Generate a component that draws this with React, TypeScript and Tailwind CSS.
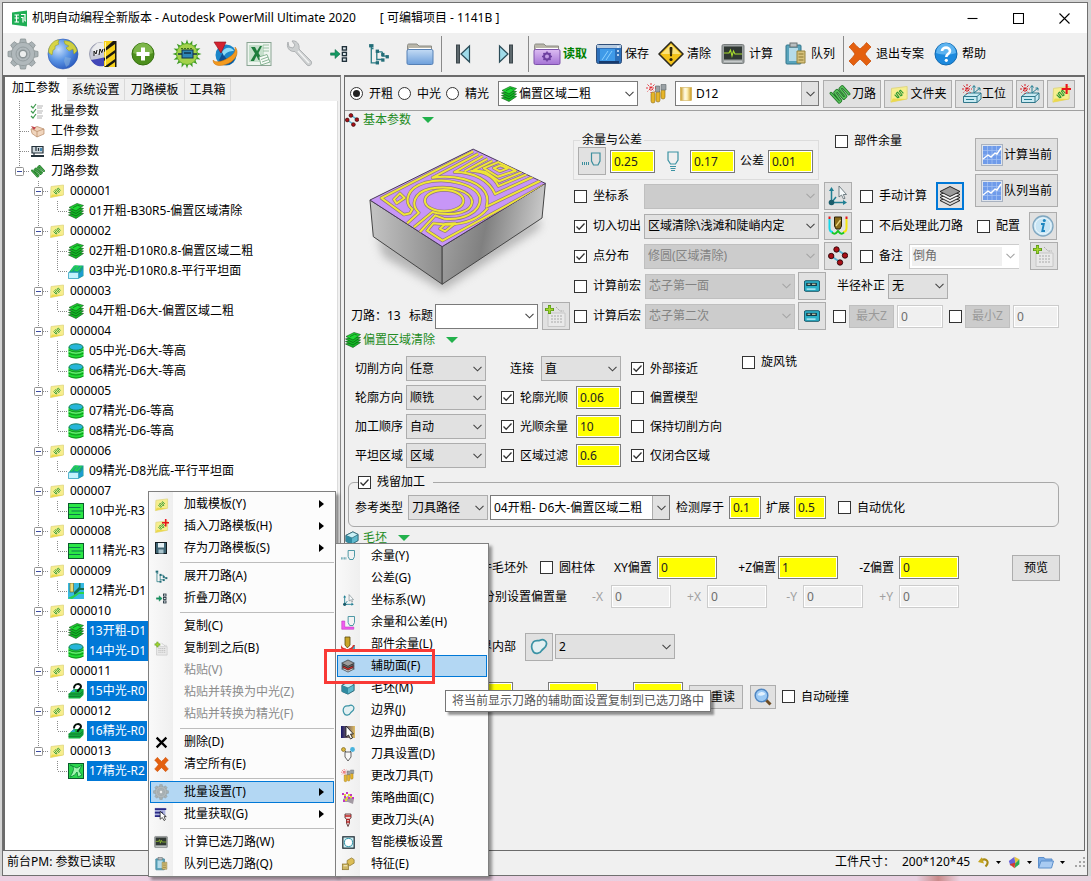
import React, { useState } from "react";
import type { ReactNode } from "react";

/* ---------- icon helpers ---------- */

type SvgProps = { s?: number; w?: number; h?: number; vb?: string; children?: ReactNode };

function Svg({ s = 16, w, h, vb = "0 0 16 16", children }: SvgProps) {
  return (
    <svg width={w ?? s} height={h ?? s} viewBox={vb} fill="none" className="block shrink-0" aria-hidden="true">
      {children}
    </svg>
  );
}

const Gear = ({ s = 32 }: { s?: number }) => (
  <Svg s={s} vb="0 0 32 32">
    <g fill="#a9b2b5" stroke="#8b9496" strokeWidth="0.8">
      {[0, 45, 90, 135, 180, 225, 270, 315].map((a) => (
        <path key={a} d="M12.5 6 L13.5 1 H18.5 L19.5 6 Z" transform={`rotate(${a} 16 16)`} />
      ))}
      <circle cx="16" cy="16" r="11.5" />
    </g>
    <circle cx="16" cy="16" r="11" fill="#b0b8bb" />
    <circle cx="16" cy="16" r="7" stroke="#949da0" strokeWidth="1" />
    <circle cx="16" cy="16" r="3.8" fill="#eceeee" stroke="#8b9496" strokeWidth="1.4" />
  </Svg>
);

const Globe = () => (
  <Svg s={32} vb="0 0 32 32">
    <defs>
      <radialGradient id="globe" cx="0.35" cy="0.35" r="0.8">
        <stop offset="0" stopColor="#c4ddfb" />
        <stop offset="0.45" stopColor="#5d97e6" />
        <stop offset="1" stopColor="#1f4db5" />
      </radialGradient>
    </defs>
    <circle cx="16" cy="16" r="15" fill="url(#globe)" stroke="#2a56b4" strokeWidth="0.6" />
    <path d="M3 8 C6 3 9 2 12 2 L11 5 L12 6 L8 8 L8 11 L6 12 L5 17 L2 15 C1 13 2 10 3 8Z" fill="#d8d545" stroke="#9aa12b" strokeWidth="0.6" />
    <path d="M17 3 C23 2 29 7 30 13 L27 16 L26 11 L22 13 L19 10 L22 8 L18 6Z" fill="#cfd03f" stroke="#9aa12b" strokeWidth="0.6" />
    <path d="M18 19 L24 20 L22 27 L19 29 L17 23Z" fill="#8fb7dc" opacity="0.5" />
  </Svg>
);

const Drill = () => (
  <Svg s={28} vb="0 0 28 28">
    <circle cx="12" cy="14" r="11.5" fill="#c8cad6" stroke="#8b8fa6" strokeWidth="0.8" />
    <path d="M2 20 C6 27 14 28 18 24 L17 17 L8 19Z" fill="#4247b8" />
    <path d="M3 9 L8 3 L16 2 L15 11 L5 16Z" fill="#f4f4f4" opacity="0.8" />
    <path d="M5 16 V11 L7 14 L8 10 M10 15 L11 9 L13 13 M14 9 L13 12" stroke="#111" strokeWidth="1" />
    <rect x="15" y="1" width="12" height="26" fill="#f7d21c" />
    <path d="M15 27 L26 19 V22 L19 27Z M15 18 L26 10 V13 L15 21Z M15 9 L24 1 H26 V4 L15 12Z M26 1 H27.5 V27 H26Z" fill="#1b1a10" />
    <path d="M16.500 2 V26" stroke="#fff3a0" strokeWidth="1" />
  </Svg>
);

const PlusBall = () => (
  <Svg s={24} vb="0 0 24 24">
    <circle cx="12" cy="12" r="11" fill="#4d8f1d" stroke="#35700f" />
    <path d="M2 11 A10 10 0 0 1 22 11 C16 13 8 13 2 11Z" fill="#7db64a" />
    <path d="M10 5.5 H14 V10 H18.5 V14 H14 V18.5 H10 V14 H5.5 V10 H10Z" fill="#fff" />
  </Svg>
);

const Chip = () => (
  <Svg s={30} vb="0 0 30 30">
    <g fill="#3d9a22">
      {[0, 22, 45, 67, 90, 112, 135, 157, 180, 202, 225, 247, 270, 292, 315, 337].map((a) => (
        <path key={a} d="M12.8 7 L15 0.5 L17.2 7Z" transform={`rotate(${a} 15 15)`} />
      ))}
    </g>
    <circle cx="15" cy="15" r="10.5" fill="#a4d24a" stroke="#5fae2c" strokeWidth="1" />
    <path d="M9 9.500 H20" stroke="#3f6e1a" strokeDasharray="2 1" />
    <rect x="10" y="11" width="11" height="8" fill="#2f86b5" stroke="#12354c" />
    <path d="M6 15 H10 M21 15 H25 M12 14 H19" stroke="#12354c" strokeWidth="1.3" />
  </Svg>
);

const Swirl = () => (
  <Svg s={28} vb="0 0 28 28">
    <circle cx="15" cy="15" r="10.5" fill="#1b86c9" />
    <path d="M8 20 C12 26 20 27 24 19 C18 22 13 18 12 12Z" fill="#0c4f93" />
    <path d="M11 12 C14 7 20 6 23 11 C19 11 15 12 13 16Z" fill="#8fdcf5" />
    <path d="M2 20 C2 27 12 27 20 22 C26 18 28 11 24 7 C25 12 22 15 17 18 C11 22 4 23 2 20Z" fill="#f39a1e" stroke="#c96f0b" strokeWidth="0.5" />
    <path d="M3 2 L15 2 L10 13 Z" fill="#d32330" stroke="#8f0f1a" strokeWidth="0.6" />
  </Svg>
);

const Excel = () => (
  <Svg s={26} vb="0 0 26 26">
    <rect x="1" y="1.5" width="24" height="23" fill="#eef5ef" stroke="#8aa493" />
    <rect x="3" y="4" width="15" height="17" fill="#c5dfcb" />
    <path d="M17 4 H23 M17 7 H23 M17 10 H23" stroke="#9cc2a5" />
    <path d="M5 6 L9 6 L11 10 L14 5 L16 5 L12.5 12 L16.5 19 H12.5 L10.5 15 L8 20 H4.5 L9 12.5Z" fill="#1f7d3d" />
    <path d="M13 16 L21 13.5 L24 21 L15 24Z" fill="#f7fbf7" stroke="#6ea37d" strokeWidth="0.8" />
    <path d="M15 18.500 L22 16 M16 21 L23 18.500" stroke="#6ea37d" strokeWidth="0.8" />
  </Svg>
);

const Wrench = () => (
  <Svg s={28} vb="0 0 28 28">
    <path
      d="M3 2 C1 7 4 12 10 11.500 L22 25 C24.500 27 28 24 26 21 L14 9 C15 4 11 0 7 1 L10 5 L8 8 L4 7Z"
      fill="#cdd0d1"
      stroke="#a9adaf"
      strokeWidth="0.900"
    />
    <path d="M13 11 L24 23" stroke="#f3f4f4" strokeWidth="1.500" />
  </Svg>
);

const Collapse = ({ s = 18 }: { s?: number }) => (
  <Svg s={s}>
    <path d="M0.500 7 H4.500 V4 L9 8 L4.500 12 V9 H0.500Z" fill="#159a63" stroke="#0d6d46" strokeWidth="0.500" />
    <g stroke="#20303a" strokeWidth="1.200" fill="#dfe8ec">
      <rect x="11" y="1.500" width="3.600" height="3" />
      <rect x="11" y="6.500" width="3.600" height="3" />
      <rect x="11" y="11.500" width="3.600" height="3" />
    </g>
  </Svg>
);

const TreeIcon = ({ s = 22 }: { s?: number }) => (
  <Svg s={s} vb="0 0 20 20">
    <path d="M3 3 V18 H8 M3 5 H5 M8 8 V16 M8 8 H13 M13 8 V12 H17 M8 15 H13" stroke="#2b7c85" strokeWidth="1.200" />
    <g fill="#236d78">
      <rect x="1" y="1" width="4" height="3" />
      <rect x="7" y="6" width="3" height="3" />
      <rect x="12" y="9" width="3" height="3" />
      <rect x="16" y="11" width="3" height="3" />
      <rect x="12" y="14" width="3" height="3" />
      <rect x="7" y="16.500" width="3" height="3" />
    </g>
  </Svg>
);

const Folder = ({ tone = "blue" }: { tone?: "blue" | "purple" }) => {
  const id = "fold" + tone;
  return (
    <Svg w={28} h={24} vb="0 0 28 24">
      <defs>
        <linearGradient id={id} x1="0" y1="0" x2="0" y2="1">
          <stop offset="0" stopColor={tone === "blue" ? "#c3dbf4" : "#dcbcf2"} />
          <stop offset="1" stopColor={tone === "blue" ? "#6d9fdb" : "#a574d6"} />
        </linearGradient>
      </defs>
      <path d="M1.500 5 V3.500 C1.500 2.500 2 2 3 2 H11 L13 4 H25.500 V8 H1.500Z" fill="#b9b6a9" stroke="#8c8c86" />
      <path d="M3 6 H25 V9 H3Z" fill="#fff" />
      <rect x="1" y="7.500" width="26" height="15" rx="1.500" fill={`url(#${id})`} stroke={tone === "blue" ? "#5580b5" : "#7e52ab"} />
      {tone === "purple" && (
        <g>
          <circle cx="14" cy="14.500" r="3" stroke="#6d3fa0" strokeWidth="2" />
          <path d="M14 9.500 V11 M14 18 V19.500 M9 14.500 H10.500 M17.500 14.500 H19 M10.500 11 L11.500 12 M16.500 17 L17.500 18 M17.500 11 L16.500 12 M10.500 18 L11.500 17" stroke="#6d3fa0" strokeWidth="1.500" />
        </g>
      )}
    </Svg>
  );
};

const Skip = ({ flip = false }: { flip?: boolean }) => (
  <Svg s={20} vb="0 0 20 20">
    <g transform={flip ? "matrix(-1 0 0 1 20 0)" : undefined}>
      <rect x="3.500" y="1" width="3" height="18" fill="#5c676c" stroke="#3c474c" />
      <path d="M16.500 2 V18 L8 10Z" fill="#9fdbe9" stroke="#2b4c58" strokeWidth="1.200" />
    </g>
  </Svg>
);

const SaveIcon = () => (
  <Svg w={26} h={22} vb="0 0 26 22">
    <rect x="0.500" y="1.500" width="25" height="19" rx="2" fill="#2c6fb9" stroke="#2f4f7a" />
    <rect x="1" y="2" width="24" height="3" fill="#b7cbe0" />
    <rect x="4" y="6" width="15" height="12" fill="#3f9ae8" />
    <path d="M6 17 L12 8 M10 17 L16 8" stroke="#8bd0ff" />
    <path d="M21 4 H23 M21 8 H23 M21 12 H23" stroke="#e8f3ff" strokeWidth="1.500" />
    <rect x="3" y="18" width="20" height="2" fill="#163a6e" />
  </Svg>
);

const Warn = () => (
  <Svg s={26} vb="0 0 26 26">
    <path d="M13 1 L25 13 L13 25 L1 13Z" fill="#f3c21a" stroke="#2c2a20" strokeWidth="1.600" strokeLinejoin="round" />
    <path d="M13 3.500 L22.500 13 H3.500Z" fill="#fbe27a" />
    <path d="M12 6.500 H14 L13.500 15 H12.500Z" fill="#2d2407" stroke="#2d2407" />
    <circle cx="13" cy="18.500" r="1.600" fill="#2d2407" />
  </Svg>
);

const Monitor = ({ s = 24 }: { s?: number }) => (
  <Svg s={s} vb="0 0 24 24">
    <rect x="1" y="2.500" width="22" height="19" rx="1.500" fill="#9da2a2" stroke="#777c7c" />
    <rect x="3" y="4.500" width="18" height="13" fill="#303833" />
    <path d="M3 11 H8 L9.500 8 L11 14 L12.500 9 L14 12 H21" stroke="#a8dd2e" strokeWidth="1.100" />
    <path d="M3 19.500 H21" stroke="#c6caca" strokeWidth="1.500" />
  </Svg>
);

const Queue = ({ s = 24 }: { s?: number }) => (
  <Svg s={s} vb="0 0 24 24">
    <rect x="3" y="3" width="15" height="19" rx="1" fill="#58a3bb" stroke="#33768c" />
    <rect x="7" y="1" width="7" height="4" fill="#b9bfc1" stroke="#6c7375" />
    <path d="M6 6 H15 V19 H6Z" fill="#b5dbe9" />
    <path d="M14 9 H22 V21 H14Z" fill="#d7c27c" stroke="#96823b" />
    <path d="M15.500 12 H20.500 M15.500 15 H20.500 M15.500 18 H20.500" stroke="#8a7731" />
  </Svg>
);

const CrossMark = ({ s = 24, fill = "#e4600f" }: { s?: number; fill?: string }) => (
  <Svg s={s} vb="0 0 24 24">
    <path
      d="M1 5 L5.500 0.500 C7 3 10 5 12 7 C14 5 17 3 18.500 0.500 L23 5 C21 7 18.500 9.500 17 12 C18.500 14.500 21 17 23 19 L18.500 23.500 C16.500 21 14 19 12 17 C10 19 7.500 21 5.500 23.500 L1 19 C3 17 5.500 14.500 7 12 C5.500 9.500 3 7 1 5Z"
      fill={fill}
      stroke="#c9520c"
      strokeWidth="0.800"
    />
  </Svg>
);

const Help = () => (
  <Svg s={24} vb="0 0 24 24">
    <circle cx="12" cy="12" r="11" fill="#1d8ade" stroke="#1369ae" />
    <path d="M2 11 A10 10 0 0 1 22 11 C16 13 8 13 2 11Z" fill="#5cb3f0" />
    <path d="M8 9 C8 4.500 16 4.500 16 9 C16 12 12.300 11.800 12.300 15" stroke="#fff" strokeWidth="2.600" />
    <circle cx="12.300" cy="18.300" r="1.600" fill="#fff" />
  </Svg>
);

const AppLogo = () => (
  <Svg s={17} vb="0 0 17 17">
    <path d="M1 2.500 L16 0.500 V16.500 L1 14.500Z" fill="#1fae55" />
    <path d="M3.500 5 H8 M3.500 8 H8 M5.500 5 V12 M3.500 12 H8 M10 4.500 H14 V11 M10 7.500 H12 V12.500 M14 11 H15" stroke="#fff" strokeWidth="1.200" />
  </Svg>
);

/* Small glyphs: tree, menus, form buttons */

const Coil = ({ s = 16 }: { s?: number }) => (
  <Svg s={s}>
    <g strokeLinecap="round" strokeLinejoin="round">
      <path d="M2 7.500 L7.500 13.500 L8.500 12.500 L4.500 7 L6 5.500 L10.500 11 L12 9.500 L8 4.500 L9.500 3 L14 8" stroke="#1f7526" strokeWidth="2" />
      <path d="M2 7.500 L7.500 13.500 L8.500 12.500 L4.500 7 L6 5.500 L10.500 11 L12 9.500 L8 4.500 L9.500 3 L14 8" stroke="#58bf5b" strokeWidth="0.900" />
    </g>
  </Svg>
);

const Note = ({ s = 16, plus = false }: { s?: number; plus?: boolean }) => (
  <Svg s={s}>
    <path d="M2 3.500 L14.500 2 V12 L1.500 14.500Z" fill="#f6ee8e" stroke="#ddd37c" strokeWidth="0.700" />
    <path d="M1.500 14.500 L3 11.500 L14.500 12Z" fill="#ecd94e" />
    <path d="M4.500 8.500 L7 11 L8 10.500 L5.800 7.500 L6.800 6.500 L9.500 9.500 L10.500 8.800 L8.300 5.800 L9.300 5 L11.500 7.500" stroke="#2f9a33" strokeWidth="0.900" strokeLinejoin="round" />
    {plus && <path d="M12.500 0 V8 M8.500 4 H16" stroke="#e8161d" strokeWidth="1.700" />}
  </Svg>
);

const Layers = ({ s = 16 }: { s?: number }) => (
  <Svg s={s}>
    <g fill="#14b825" stroke="#06510f" strokeWidth="0.600">
      <path d="M0.500 12 L10 9.500 L15.500 10.500 L8 15.500Z" />
      <path d="M0.500 9.500 L10 7 L15.500 8 L8 13Z" />
      <path d="M0.500 7 L10 4.500 L15.500 5.500 L8 10.500Z" />
      <path d="M1 4.500 L9 0.500 L15.500 2.500 L8 8Z" fill="#1fd733" />
    </g>
    <path d="M5 4.600 L9.500 2.300 L12.500 3.200" stroke="#0a7217" strokeWidth="0.800" />
  </Svg>
);

const Cyl = () => (
  <Svg>
    <path d="M0.500 4 V13.500 Q8 17.500 15.500 13.500 V4Z" fill="#1fdc33" />
    <path d="M0.500 7.200 Q8 10.800 15.500 7.200 M0.500 10.200 Q8 13.800 15.500 10.200 M0.500 13.200 Q8 16.800 15.500 13.200" stroke="#0c7a1b" strokeWidth="0.800" />
    <path d="M1 8.300 Q8 12 15 8.300" stroke="#d8f7d8" strokeWidth="0.500" />
    <ellipse cx="8" cy="4" rx="7" ry="3.200" fill="#27b5d9" stroke="#127a58" strokeWidth="0.900" />
  </Svg>
);

const Flat = () => (
  <Svg>
    <path d="M1 9 L6 2.500 H15.500 V13 L11 15.500 H0.500Z" fill="#1a9d8c" />
    <path d="M0.500 9.500 H10.500 V15.500 H0.500Z" fill="#c4f2fc" stroke="#2e9fc0" strokeWidth="0.700" />
    <path d="M3 8 L7.500 3 L10 3.500 L7 7 L9.500 7.500 L13.500 3" stroke="#25d84c" strokeWidth="1.200" />
    <path d="M11 11 L15 6 V12.500 L11 15Z" fill="#1e9dd0" />
  </Svg>
);

const Zig = () => (
  <Svg>
    <rect x="0.500" y="0.500" width="15" height="15" fill="#2be846" stroke="#0a5a2c" />
    <path d="M1 4.500 H12.500 M3.500 8 H15 M1 11.500 H12.500" stroke="#0d7a4c" strokeWidth="1" />
  </Svg>
);

const Corner = () => (
  <Svg>
    <rect width="16" height="16" fill="#37b9e2" />
    <path d="M6 12 V9 L11 4 V0 H12.500 V5 H16 V7 H12 L8 11Z" fill="#146f52" />
    <path d="M0 15 L8 11 L11 9 H16 V11 H11 L4 16Z" fill="#2bd34c" />
    <rect x="2" y="0" width="3.500" height="9" fill="#e9dc7a" stroke="#6a5a12" strokeWidth="0.600" />
  </Svg>
);

const Pencil = () => (
  <Svg>
    <path d="M0.500 11 L6 6 H15.500 V12 L12 15.500 H0.500Z" fill="#16b142" />
    <path d="M0.500 11 H12 L15.500 8 M0.500 13.300 H12 L15.500 10" stroke="#0a6122" strokeWidth="0.700" />
    <path d="M6 5.500 C6 0 13 0 13 3.500 C13 6 10 6 9.500 9" stroke="#051109" strokeWidth="2" />
    <path d="M2.500 9 L6.500 5.500 L7 9Z" fill="#2aa3c4" />
  </Svg>
);

const Star = () => (
  <Svg>
    <rect x="0.500" y="0.500" width="15" height="15" fill="#2bd64d" stroke="#0a5a2c" />
    <path d="M2 2 C6 3 6 6 5 8 C4 11 3 12 2 14 C6 13 8 11 9 9 L10 14 L14 12 L11 8 L14 2 L9 5 Z" fill="#9df5ad" stroke="#0f8a3a" strokeWidth="0.900" />
  </Svg>
);

const Checklist = () => (
  <Svg>
    <path d="M1 3 L3 5 L6 1 M1 8 L3 10 L6 6 M1 13 L3 15 L6 11" stroke="#3f9a4e" strokeWidth="1.200" />
    <path d="M7 3 H13 M7 5 H12 M7 8 H13 M7 10 H12 M7 13 H13 M7 15 H12" stroke="#b4b4b4" strokeWidth="1.200" />
  </Svg>
);

const PartBox = () => (
  <Svg>
    <path d="M1 6 L7 3.500 L14 6 V11 L7 14 L2 10.500Z" fill="#f0d5bd" stroke="#b58763" strokeWidth="0.700" />
    <path d="M2 6 L7 8.500 L14 6 M7 8.500 V14" stroke="#b58763" strokeWidth="0.700" />
    <path d="M1 3 L6 4.500 L4 7Z" fill="#c2424a" />
  </Svg>
);

const Machine = () => (
  <Svg>
    <path d="M2 3.500 H13 V10 H2Z" fill="#cfd8dd" stroke="#23313a" strokeWidth="1.200" />
    <path d="M1 13 H14" stroke="#23313a" strokeWidth="2" />
    <path d="M6 4 V8 M8.500 5 V8 M4 10 V12" stroke="#23313a" strokeWidth="1.200" />
    <rect x="10" y="5" width="2" height="3" fill="#4389b5" />
  </Svg>
);

const Dots = ({ s = 14 }: { s?: number }) => (
  <Svg s={s} vb="0 0 20 20">
    <path d="M9 3.500 L17 9 M3 10 L12 16" stroke="#57b4d2" strokeWidth="2" />
    <g fill="#a80f16" stroke="#2a0507" strokeWidth="0.900">
      <circle cx="8.500" cy="3.500" r="2.700" />
      <circle cx="17" cy="9.500" r="2.700" />
      <circle cx="3.200" cy="10" r="2.700" />
      <circle cx="12" cy="16.500" r="2.700" />
    </g>
  </Svg>
);

const Cutter = ({ s = 20, mode = "side" }: { s?: number; mode?: "side" | "bottom" | "pink" }) => (
  <Svg s={s} vb="0 0 20 20">
    {mode === "pink" && <path d="M1 8 H5 V16 H17 V19 H1Z" fill="#f05bf0" stroke="#b72cb7" strokeWidth="0.700" />}
    {mode === "bottom" ? (
      <g stroke="#3c93a3" strokeWidth="1.200">
        <path d="M5 1 H15 V9 L12.500 13 H7.500 L5 9Z" />
        <path d="M7 15.500 H13 M7.500 17.500 H12.500 M8 19.500 H12" strokeWidth="1" />
      </g>
    ) : (
      <g stroke="#3c8e9d" strokeWidth="1.200">
        <path d="M9.500 2 H18 V10 L16 14 H11.500 L9.500 10Z" />
        {mode === "side" && <path d="M0.500 11 V14 M2.500 11 V14 M4.500 11 V14 M6.500 11 V14" strokeWidth="1" />}
      </g>
    )}
  </Svg>
);

const Axes = ({ s = 22 }: { s?: number }) => (
  <Svg s={s} vb="0 0 22 22">
    <path d="M4.500 17.500 V4 M5 17.500 H18 M5 17 L9 12" stroke="#217f93" strokeWidth="1.500" />
    <path d="M4.500 2 L7 6 H2Z M20 17.500 L16 15 V20Z" fill="#217f93" />
    <circle cx="4.500" cy="17.500" r="2.800" fill="#1a5c6b" />
    <path d="M12 1 V12 L14.500 10 L16.500 14 L18 13.300 L16.300 9.500 H19.500Z" fill="#f6fafb" stroke="#56666c" strokeWidth="0.800" />
  </Svg>
);

const LeadIn = () => (
  <Svg s={22} vb="0 0 22 22">
    <path d="M2.500 4 V13 C2.500 16 4 17 6 17" stroke="#15d6e8" strokeWidth="2" />
    <path d="M19.500 4 V13 C19.500 16 18 17 16 17" stroke="#f4e60c" strokeWidth="2" />
    <path d="M5 17.500 C8 20 9 18 11 16 C13 18 14 20 17 17.500" stroke="#17c722" strokeWidth="2" />
    <path d="M2.500 1.500 V4 M19.500 1.500 V4" stroke="#e51818" strokeWidth="2" />
    <path d="M7.500 2 H14.500 V11 L13 14 H9 L7.500 11Z" fill="#8a6b19" stroke="#2a220a" />
    <path d="M9 11 L13.500 5" stroke="#ead27c" strokeWidth="1.300" />
  </Svg>
);

const Macro = () => (
  <Svg w={16} h={12} vb="0 0 18 13">
    <rect x="0.500" y="0.500" width="17" height="12" rx="1.500" fill="#2daec6" stroke="#114e5f" />
    <rect x="2.500" y="3" width="12" height="3.500" fill="#133945" />
    <path d="M4 4.500 H7 M9 4.500 H13" stroke="#f1e8c0" strokeWidth="1.200" />
    <path d="M3 10 H13" stroke="#bdf0fa" strokeWidth="1.500" />
  </Svg>
);

const Stack = ({ s = 22, red = false }: { s?: number; red?: boolean }) => (
  <Svg s={s} vb="0 0 22 22">
    <g stroke="#111" strokeWidth="0.900" strokeLinejoin="round">
      <path d="M1 15.500 L11 11 L21 15.500 L11 20.500Z" fill="#d8d8d8" />
      <path d="M1 12.500 L11 8 L21 12.500 L11 17.500Z" fill={red ? "#e0322f" : "#f2f2f2"} />
      <path d="M1 9.500 L11 5 L21 9.500 L11 14.500Z" fill={red ? "#6b6b6b" : "#f2f2f2"} />
      <path d="M1 6.500 L11 1.500 L21 6.500 L11 11.500Z" fill="#9c9c9c" />
    </g>
  </Svg>
);

const Info = () => (
  <Svg s={22} vb="0 0 22 22">
    <circle cx="11" cy="11" r="10" fill="#c9e5f4" stroke="#7fa6bf" strokeWidth="1.300" />
    <circle cx="11" cy="11" r="8" stroke="#eaf6fc" strokeWidth="1" />
    <circle cx="12.300" cy="5.500" r="1.500" fill="#1f86c0" />
    <path d="M9 9 H11.800 L10.300 16 H13" stroke="#1f86c0" strokeWidth="1.900" />
  </Svg>
);

const AddNote = ({ s = 24 }: { s?: number }) => (
  <Svg s={s} vb="0 0 24 24">
    <path d="M4 9 H21 V22.500 H4Z" fill="#e9e9e9" stroke="#c6c6c6" />
    <path d="M12 3 L16 7 H20 M7 12 H19 M7 15 H19 M7 18 H19" stroke="#a9a9a9" strokeDasharray="2 1" />
    <path d="M5.500 1 V10 M1 5.500 H10" stroke="#5f9c1d" strokeWidth="3" />
    <path d="M5.500 2 V9 M2 5.500 H9" stroke="#a4d62c" strokeWidth="1.500" />
  </Svg>
);

const Chart = () => (
  <Svg s={22} vb="0 0 22 22">
    <rect x="0.500" y="0.500" width="21" height="21" fill="#dfe5ee" stroke="#a9b2c0" />
    <rect x="2" y="2" width="18" height="18" fill="#6f9bea" />
    <path d="M2 6.500 H20 M2 11 H20 M2 15.500 H20 M6.500 2 V20 M11 2 V20 M15.500 2 V20" stroke="#a6c3f4" strokeWidth="0.700" />
    <path d="M2 15 L7 11 L10 13 L14 9 L16 10 L20 4" stroke="#fff" strokeWidth="1.400" />
  </Svg>
);

const Tools = ({ s = 22 }: { s?: number }) => (
  <Svg s={s} vb="0 0 22 22">
    <g fill="#e6b52a" stroke="#8c6a12" strokeWidth="0.600">
      <rect x="5" y="9" width="4" height="11" rx="2" />
      <rect x="10" y="8" width="4" height="11" rx="2" />
      <rect x="15" y="6" width="4" height="10" rx="2" />
    </g>
    <path d="M9.500 3 H13.500 V9 H9.500Z M15 1.500 H20 V7 H15Z" fill="#9aa1a5" stroke="#5d6468" strokeWidth="0.600" />
    <path d="M5 0 V10 M0 5 H10 M1.500 1.500 L8.500 8.500 M8.500 1.500 L1.500 8.500" stroke="#e2242b" strokeWidth="0.900" strokeDasharray="2 1" />
  </Svg>
);

const Bar = () => (
  <Svg w={12} h={14} vb="0 0 12 14">
    <defs>
      <linearGradient id="bar">
        <stop offset="0" stopColor="#c99a1f" />
        <stop offset="0.400" stopColor="#fffbe6" />
        <stop offset="0.600" stopColor="#fff2bb" />
        <stop offset="1" stopColor="#c9971a" />
      </linearGradient>
    </defs>
    <rect x="0.500" y="0.500" width="11" height="13" fill="url(#bar)" stroke="#c6a03a" strokeWidth="0.500" />
  </Svg>
);

const Station = ({ s = 20 }: { s?: number }) => (
  <Svg s={s} vb="0 0 20 20">
    <path d="M1.500 12.500 L6 9 H19 V15 L15 18.500 H1.500Z" fill="#c8eaf2" stroke="#1f6b80" strokeWidth="0.900" />
    <path d="M1.500 12.500 H15 V18.500 M15 12.500 L19 9" stroke="#1f6b80" strokeWidth="0.900" />
    <path d="M12 9 V2 M10.500 3.500 L12 1.500 L13.500 3.500 M12 9 L18 4 M15.500 4 H18 V6.500 M4 15.500 H12" stroke="#237e93" strokeWidth="1" />
    <path d="M5 0 V10 M0 5 H10 M1.500 1.500 L8.500 8.500 M8.500 1.500 L1.500 8.500" stroke="#d31d25" strokeWidth="1" strokeDasharray="2 1" />
  </Svg>
);

const Block = ({ s = 14 }: { s?: number }) => (
  <Svg s={s}>
    <path d="M1 5 L9 1 L15 4 V11 L8 15 L1 12Z" fill="#5fb9cd" stroke="#174f60" strokeWidth="0.900" />
    <path d="M1 5 L9 1 L15 4 L8 8Z" fill="#c9f0f6" stroke="#174f60" strokeWidth="0.700" />
    <path d="M1 5 L8 8 V15 L1 12Z" fill="#2f8aa0" />
  </Svg>
);

const Blob = ({ s = 18 }: { s?: number }) => (
  <Svg s={s}>
    <path d="M3 3.500 C5 1.500 7 3 9 2 C12 0.500 15.500 3 14.500 6 C14 9 12 9 10.500 11 C9 14 4 15 2.500 11.500 C1 8.500 0.800 6 3 3.500Z" stroke="#3b93a5" strokeWidth="1.500" fill="#e3f0f2" />
  </Svg>
);

const Lens = () => (
  <Svg s={18} vb="0 0 18 18">
    <path d="M11 11 L16.500 16.500" stroke="#6d4b22" strokeWidth="3" />
    <circle cx="7.500" cy="7.500" r="6.300" fill="#9ccaf5" stroke="#4f86c2" strokeWidth="1.500" />
    <path d="M3.500 7 A4.500 4.500 0 0 1 11.500 6 C9 8 6 8 3.500 7Z" fill="#e2f1fe" />
  </Svg>
);

const Disk = () => (
  <Svg s={12} vb="0 0 12 12">
    <rect x="0.500" y="0.500" width="11" height="11" fill="#3e6473" stroke="#131c20" />
    <rect x="3" y="1" width="6" height="4.500" fill="#e3eff3" />
    <rect x="3.500" y="7.500" width="5" height="4" fill="#a9c4cd" />
  </Svg>
);

const PickList = () => (
  <Svg s={14}>
    <rect x="1" y="1" width="12" height="10" fill="#aab0dc" />
    <path d="M1 2.500 H14 M1 6.500 H10 M1 10.500 H8" stroke="#2b2a86" strokeWidth="2" />
    <path d="M7 5 V14 L9.500 12 L11.500 15.500 L13 14.500 L11.500 11 H14Z" fill="#fff" stroke="#111" strokeWidth="0.800" />
  </Svg>
);

const PartStock = () => (
  <Svg>
    <path d="M1 8 C1 14 12 14 13 9 L15 9 V15 H3 L1 12Z" fill="#d8352d" />
    <path d="M11 15 L15 9 V15Z" fill="#4aa8be" />
    <path d="M5 1 H10 V9 L7.500 12 L5 9Z" fill="#c9a528" stroke="#5c4a0e" strokeWidth="0.800" />
    <path d="M3 9 L7 13 L12 10" stroke="#fff" />
  </Svg>
);

const PickSurface = () => (
  <Svg>
    <defs>
      <linearGradient id="pick">
        <stop offset="0" stopColor="#17176b" />
        <stop offset="1" stopColor="#e0bd62" />
      </linearGradient>
    </defs>
    <rect x="1" y="2" width="14" height="12" fill="url(#pick)" />
    <path d="M6 2 V13 L8.500 11 L10.500 15 L12.500 14 L10.500 10 H13.500Z" fill="#fff" stroke="#111" strokeWidth="0.800" />
  </Svg>
);

const ToolSetup = () => (
  <Svg>
    <path d="M5 6 H11 V11 L8 15 L5 11Z" fill="#f8f8f8" stroke="#555" strokeWidth="0.900" />
    <path d="M3 3 L6 6 M13 3 L10 6" stroke="#555" />
    <circle cx="3.500" cy="3.500" r="2" fill="#d7b43a" stroke="#6d5512" strokeWidth="0.600" />
    <circle cx="12.500" cy="3.500" r="2.400" fill="#48b3dd" />
  </Svg>
);

const StrategySurface = () => (
  <Svg>
    <path d="M3 9 L8 6 L14 9 L13 14 L8 12 L3 12Z" fill="#a39aa3" />
    <g fill="#c238c2">
      <rect x="2" y="3" width="2" height="2" />
      <rect x="6" y="2" width="2" height="2" />
      <rect x="10" y="4" width="2" height="2" />
      <rect x="12" y="7" width="2" height="2" />
      <rect x="4" y="6" width="2" height="2" />
      <rect x="3" y="10" width="2" height="2" />
      <rect x="8" y="7" width="2" height="2" />
    </g>
    <g fill="#e6cf3a">
      <rect x="4" y="4" width="2" height="2" />
      <rect x="8" y="4" width="2" height="2" />
      <rect x="6" y="7" width="2" height="2" />
      <rect x="10" y="6" width="2" height="2" />
      <rect x="5" y="9" width="2" height="2" />
    </g>
  </Svg>
);

const ToolTip = () => (
  <Svg>
    <path d="M5 2 H11 V6 L9.500 7 V11 L8 14.500 L6.500 11 V7 L5 6Z" fill="#f1dede" stroke="#4a1a1a" strokeWidth="0.800" />
    <path d="M5 4 H11 M6.500 7.500 H9.500 M6.500 10 H9.500" stroke="#c02020" strokeWidth="1.300" />
  </Svg>
);

const SmartTemplate = () => (
  <Svg s={13}>
    <rect x="1" y="1" width="14" height="14" fill="#cfeef3" stroke="#1c2a33" strokeWidth="1.500" />
    <circle cx="8" cy="8" r="5" stroke="#2e92a7" strokeWidth="1.200" fill="#fff" />
  </Svg>
);

const Feature = () => (
  <Svg s={14}>
    <path d="M7 4 L12 1 L15 3 V7 L10 10 L7 8Z" fill="#dcbd56" stroke="#8a722a" strokeWidth="0.800" />
    <rect x="1.500" y="8" width="7" height="6.500" fill="#cdb765" stroke="#8a722a" strokeWidth="0.800" />
    <path d="M3 10 H7" stroke="#fff8dc" />
  </Svg>
);

const Undo = () => (
  <Svg s={12}>
    <path d="M4 6 C11 2 16 8 10 14" stroke="#a88a16" strokeWidth="2.800" />
    <path d="M0 8 L5 1.500 L8 10Z" fill="#c5a51f" />
  </Svg>
);

const Cube = () => (
  <Svg s={13}>
    <path d="M1 6 L8 1 L9 9 L3 12Z" fill="#6a63d8" />
    <path d="M8 1 L14 4 L9 9Z" fill="#e6c53c" />
    <path d="M9 9 L14 4 V10 L8 15Z" fill="#2fa84f" />
    <path d="M2 10 L9 8 L8 15Z" fill="#d23d33" />
  </Svg>
);

const SmallFolder = () => (
  <Svg w={16} h={13} vb="0 0 16 13">
    <path d="M0.500 12 V1.500 H6 L7 3 H14 V5" fill="#7eaee6" stroke="#5c8fcb" />
    <path d="M0.500 12 L3 5 H15.500 L13.500 12Z" fill="#a9cbf2" stroke="#5c8fcb" />
  </Svg>
);

const BlockPicture = () => (
  <Svg w={193} h={160} vb="60 120 580 480">
    <defs>
      <linearGradient id="faceL">
        <stop offset="0" stopColor="#c4c4c4" />
        <stop offset="1" stopColor="#8b8b8b" />
      </linearGradient>
      <linearGradient id="faceR" x1="0" y1="0.200" x2="1" y2="0.400">
        <stop offset="0" stopColor="#a4a4a4" />
        <stop offset="0.450" stopColor="#808080" />
        <stop offset="1" stopColor="#d0d0d0" />
      </linearGradient>
      <filter id="soft" x="-20%" y="-20%" width="140%" height="150%">
        <feGaussianBlur stdDeviation="14" />
      </filter>
      <clipPath id="topFace">
        <path d="M90 300 L400 147 L617 250 L307 440Z" />
      </clipPath>
    </defs>
    <path d="M110 405 L310 500 L600 350 L600 385 L310 572 L130 470Z" fill="#8e8e8e" opacity="0.600" filter="url(#soft)" />
    <path d="M90 300 L307 440 V553 L100 410Z" fill="url(#faceL)" stroke="#444" strokeWidth="3" />
    <path d="M307 440 L617 250 L607 354 L307 553Z" fill="url(#faceR)" stroke="#444" strokeWidth="3" />
    <path d="M90 300 L400 147 L617 250 L307 440Z" fill="#c796f7" stroke="#4a3c58" strokeWidth="3" />
    <g clipPath="url(#topFace)">
      <g transform="translate(72 132)" strokeLinejoin="round">
        {[
          { c: "#8f7780", w: 10 },
          { c: "#efe636", w: 6 },
        ].map((p) => (
          <g key={p.c} stroke={p.c} strokeWidth={p.w}>
            <ellipse cx="241" cy="170" rx="58" ry="32" />
            <path d="M328 22 L52 162 L120 212 L138 208 L145 196 C118 172 130 132 182 116 C250 98 342 122 349 164 C350 206 296 230 240 224 L214 214 L168 264" />
            <path d="M130 238 L165 206 C140 184 148 146 198 134 C262 122 324 142 325 174 C322 206 272 214 222 208 L206 204 L150 250" />
            <path d="M343 29 L206 101 C268 92 340 106 364 144 C376 164 370 176 368 188 L530 110" />
            <path d="M357 36 L272 84 C330 84 376 108 394 150 L508 98" />
            <path d="M371 44 L302 82 M320 80 C364 82 392 100 404 126 L490 90" />
            <path d="M386 50 L330 78 L366 84 L406 112 L474 84" />
            <path d="M404 54 L360 72 L402 98 L456 80Z" />
            <path d="M410 64 L390 72 L408 82 L432 73Z" />
            <path d="M540 124 L236 290 L190 260 L208 238 L250 242 C312 240 350 220 372 192" />
            <path d="M228 254 L244 240 L274 238 L244 262Z" />
            <path d="M90 166 L108 148 L122 162 L98 178Z" />
          </g>
        ))}
      </g>
    </g>
  </Svg>
);

/* ---------- form primitives ---------- */

type CheckProps = { label: string; on?: boolean };

function Check({ label, on = false }: CheckProps) {
  const [v, setV] = useState(on);
  return (
    <label className="flex h-4 shrink-0 items-center gap-1.5 whitespace-nowrap">
      <span className="grid size-[13px] shrink-0">
        <input
          type="checkbox"
          checked={v}
          aria-label={label}
          onChange={() => setV(!v)}
          className="size-[13px] appearance-none border border-[#333] bg-white [grid-area:1/1]"
        />
        {v && (
          <svg viewBox="0 0 13 13" className="pointer-events-none size-[13px] [grid-area:1/1]" fill="none" aria-hidden="true">
            <path d="M2.500 6.500 L5.200 9.300 L10.500 3.500" stroke="#333" strokeWidth="1.300" />
          </svg>
        )}
      </span>
      {label}
    </label>
  );
}

function BareCheck({ label }: { label: string }) {
  return <input type="checkbox" aria-label={label} className="size-[13px] shrink-0 appearance-none border border-[#333] bg-white" />;
}

function Radio({ label, checked }: { label: string; checked?: boolean }) {
  return (
    <label className="flex w-12 shrink-0 items-center gap-1.5 whitespace-nowrap">
      <span className="grid size-[13px] shrink-0 place-items-center">
        <input type="radio" name="stage" defaultChecked={checked} className="peer size-[13px] appearance-none rounded-full border border-[#333] bg-white [grid-area:1/1]" />
        <span className="pointer-events-none hidden size-[7px] rounded-full bg-[#222] [grid-area:1/1] peer-checked:block" />
      </span>
      {label}
    </label>
  );
}

type DropProps = {
  label: string;
  value: string;
  width: string;
  tone?: "button" | "disabled" | "white" | "pale";
  arrowBox?: boolean;
  icon?: ReactNode;
};

const dropTone = {
  button: "border-[#adadad] bg-[#e1e1e1] text-black",
  disabled: "border-[#bfbfbf] bg-[#cccccc] text-[#838383]",
  white: "border-[#7a7a7a] bg-white text-black",
  pale: "border-[#cccccc] bg-[#f0f0f0] text-[#6d6d6d] shadow-[inset_0_0_0_2px_#fff]",
};

function Drop({ label, value, width, tone = "button", arrowBox = false, icon }: DropProps) {
  const dim = tone === "disabled" || tone === "pale";
  return (
    <span className={`grid h-[25px] shrink-0 items-center ${width}`}>
      <select
        aria-label={label}
        disabled={dim}
        defaultValue={value}
        className={`h-[25px] w-full appearance-none border pr-5 opacity-100 [grid-area:1/1] ${icon ? "pl-5" : "pl-[3px]"} ${dropTone[tone]}`}
      >
        <option value={value}>{value}</option>
      </select>
      {icon && <span className="pointer-events-none ml-[3px] justify-self-start [grid-area:1/1]">{icon}</span>}
      <span
        className={`pointer-events-none grid h-[23px] w-[17px] place-items-center justify-self-end [grid-area:1/1] ${
          arrowBox ? "mr-px border-l border-[#adadad] bg-[#e1e1e1]" : ""
        } ${tone === "pale" ? "h-[21px] bg-white" : ""}`}
      >
        <svg width="9" height="6" viewBox="0 0 9 6" fill="none" aria-hidden="true">
          <path d="M0.500 0.800 L4.500 4.800 L8.500 0.800" stroke={dim ? "#a5a5a5" : "#444"} strokeWidth="1.100" />
        </svg>
      </span>
    </span>
  );
}

function Field({ label, value, width = "w-[45px]", off = false }: { label: string; value: string; width?: string; off?: boolean }) {
  return (
    <input
      aria-label={label}
      defaultValue={value}
      disabled={off}
      className={`h-[23px] shrink-0 border px-[3px] shadow-[inset_0_0_0_1px_#fff] ${width} ${
        off ? "border-[#cccccc] bg-[#f0f0f0] text-[#6d6d6d]" : "border-[#7a7a7a] bg-[#ffff00] text-[#222]"
      }`}
    />
  );
}

function IconBtn({ label, children, active = false }: { label: string; children: ReactNode; active?: boolean }) {
  return (
    <button
      type="button"
      aria-label={label}
      className={`grid size-7 shrink-0 place-items-center bg-[#e1e1e1] ${active ? "border-2 border-[#0078d7]" : "border border-[#adadad]"}`}
    >
      {children}
    </button>
  );
}

function TextBtn({ children, className }: { children: ReactNode; className: string }) {
  return (
    <button type="button" className={`flex shrink-0 items-center justify-center whitespace-nowrap border border-[#adadad] bg-[#e1e1e1] ${className}`}>
      {children}
    </button>
  );
}

function SectionHead({ icon, title }: { icon: ReactNode; title: string }) {
  return (
    <button type="button" className="flex h-[18px] items-center text-[#228b22]">
      <span className="grid w-[18px] place-items-center justify-items-start">{icon}</span>
      {title}
      <svg width="12" height="6" viewBox="0 0 12 6" className="ml-[11px]" aria-hidden="true">
        <path d="M0 0 H12 L6 6Z" fill="#22b14c" />
      </svg>
    </button>
  );
}

const Lbl = ({ children, width = "" }: { children: ReactNode; width?: string }) => (
  <span className={`shrink-0 whitespace-nowrap ${width}`}>{children}</span>
);

/* ---------- top of window ---------- */

function TitleBar() {
  return (
    <header className="flex h-[30px] items-center bg-white pl-2">
      <AppLogo />
      <h1 className="ml-1 flex gap-6 whitespace-nowrap">
        <span>机明自动编程全新版本 - Autodesk PowerMill Ultimate 2020</span>
        <span>[ 可编辑项目 - 1141B ]</span>
      </h1>
      <div className="ml-auto flex">
        {[
          { n: "最小化", d: "M0.500 5.500 H10.500" },
          { n: "最大化", d: "M0.500 0.500 H10.500 V10.500 H0.500Z" },
          { n: "关闭", d: "M0.500 0.500 L10.500 10.500 M10.500 0.500 L0.500 10.500" },
        ].map((b) => (
          <button key={b.n} type="button" aria-label={b.n} className="grid h-[30px] w-[46px] place-items-center">
            <svg width="11" height="11" viewBox="0 0 11 11" fill="none" aria-hidden="true">
              <path d={b.d} stroke="#000" strokeWidth="1.100" />
            </svg>
          </button>
        ))}
      </div>
    </header>
  );
}

const tools: { n: string; w: string; i: ReactNode }[] = [
  { n: "设置", w: "w-10", i: <Gear /> },
  { n: "全局", w: "w-10", i: <Globe /> },
  { n: "刀具", w: "w-10", i: <Drill /> },
  { n: "新增", w: "w-10", i: <PlusBall /> },
  { n: "处理器", w: "w-12", i: <Chip /> },
  { n: "浏览", w: "w-7", i: <Swirl /> },
  { n: "表格", w: "w-10", i: <Excel /> },
  { n: "工具", w: "w-10", i: <Wrench /> },
  { n: "折叠", w: "w-10", i: <Collapse /> },
  { n: "展开", w: "w-10", i: <TreeIcon /> },
  { n: "打开", w: "w-[42px]", i: <Folder /> },
];

const ToolSep = () => <span className="h-9 w-px shrink-0 bg-[#8a8a8a]" />;

function ToolBtn({ icon, text, strong = false }: { icon: ReactNode; text: string; strong?: boolean }) {
  return (
    <button type="button" className={`flex shrink-0 items-center gap-0.5 whitespace-nowrap ${strong ? "font-bold text-[#008000]" : ""}`}>
      <span className="grid w-7 place-items-center">{icon}</span>
      {text}
    </button>
  );
}

function ToolBar() {
  return (
    <nav className="flex h-[42px] items-center overflow-hidden pb-px">
      {tools.map((t) => (
        <button key={t.n} type="button" aria-label={t.n} className={`grid h-9 shrink-0 place-items-center ${t.w}`}>
          {t.i}
        </button>
      ))}
      <ToolSep />
      <button type="button" aria-label="上一个" className="grid h-9 w-[42px] shrink-0 place-items-center">
        <Skip />
      </button>
      <button type="button" aria-label="下一个" className="grid h-9 w-11 shrink-0 place-items-center">
        <Skip flip />
      </button>
      <ToolSep />
      <div className="flex gap-2 pr-2 pl-1">
        <ToolBtn icon={<Folder tone="purple" />} text="读取" strong />
        <ToolBtn icon={<SaveIcon />} text="保存" />
        <ToolBtn icon={<Warn />} text="清除" />
        <ToolBtn icon={<Monitor />} text="计算" />
        <ToolBtn icon={<Queue />} text="队列" />
      </div>
      <ToolSep />
      <div className="flex gap-2 pl-0.5">
        <ToolBtn icon={<CrossMark />} text="退出专案" />
        <ToolBtn icon={<Help />} text="帮助" />
      </div>
    </nav>
  );
}

/* ---------- tree ---------- */

type Guide = "none" | "line" | "tee" | "end" | "box" | "boxEnd" | "boxRoot";

function GuideCell({ kind }: { kind: Guide }) {
  const box = kind === "box" || kind === "boxEnd" || kind === "boxRoot";
  const down = kind === "line" || kind === "tee" || kind === "box";
  const side = kind === "tee" || kind === "end" || box;
  return (
    <svg width="19" height="20" viewBox="0 0 19 20" fill="none" className="block shrink-0" aria-hidden="true">
      <g stroke="#8a8a8a" strokeDasharray="1 1">
        {kind !== "none" && <path d={`M9.500 0 V${down ? 20 : 10}`} />}
        {side && <path d="M10 10.500 H19" />}
      </g>
      {box && (
        <g>
          <rect x="5.500" y="6.500" width="8" height="8" rx="1" fill="#fff" stroke="#919191" />
          <path d="M7 10.500 H12" stroke="#3a4aa0" />
        </g>
      )}
    </svg>
  );
}

function TreeRow({ guides, icon, text, selected = false }: { guides: Guide[]; icon: ReactNode; text: string; selected?: boolean }) {
  return (
    <div role="treeitem" aria-selected={selected} className="flex h-5 items-center">
      {guides.map((g, i) => (
        <GuideCell key={i} kind={g} />
      ))}
      <span className="ml-px">{icon}</span>
      <span className={`ml-[3px] flex h-5 items-center whitespace-nowrap px-0.5 ${selected ? "bg-[#0078d7] text-white" : ""}`}>{text}</span>
    </div>
  );
}

type Leaf = { t: string; k: "layers" | "flat" | "cyl" | "zig" | "corner" | "pencil" | "star"; sel?: boolean };

const leafIcon = {
  layers: <Layers />,
  flat: <Flat />,
  cyl: <Cyl />,
  zig: <Zig />,
  corner: <Corner />,
  pencil: <Pencil />,
  star: <Star />,
};

const groups: Leaf[][] = [
  [{ t: "01开粗-B30R5-偏置区域清除", k: "layers" }],
  [
    { t: "02开粗-D10R0.8-偏置区域二粗", k: "layers" },
    { t: "03中光-D10R0.8-平行平坦面", k: "flat" },
  ],
  [{ t: "04开粗-D6大-偏置区域二粗", k: "layers" }],
  [
    { t: "05中光-D6大-等高", k: "cyl" },
    { t: "06精光-D6大-等高", k: "cyl" },
  ],
  [
    { t: "07精光-D6-等高", k: "cyl" },
    { t: "08精光-D6-等高", k: "cyl" },
  ],
  [{ t: "09精光-D8光底-平行平坦面", k: "flat" }],
  [{ t: "10中光-R3", k: "zig" }],
  [{ t: "11精光-R3", k: "zig" }],
  [{ t: "12精光-D1", k: "corner" }],
  [
    { t: "13开粗-D1", k: "layers", sel: true },
    { t: "14中光-D1", k: "cyl", sel: true },
  ],
  [{ t: "15中光-R0", k: "pencil", sel: true }],
  [{ t: "16精光-R0", k: "pencil", sel: true }],
  [{ t: "17精光-R2", k: "star", sel: true }],
];

function LeftPanel() {
  return (
    <aside className="flex w-[338px] shrink-0 flex-col border-2 border-r border-b border-[#6b6b6b] border-r-[#8a8a8a]">
      <div role="tablist" className="flex h-6 items-start">
        <button role="tab" aria-selected="true" type="button" className="h-6 w-[62px] bg-white pb-0.5">
          加工参数
        </button>
        {[
          ["系统设置", "w-[58px]"],
          ["刀路模板", "w-[60px]"],
          ["工具箱", "w-[46px]"],
        ].map(([t, w]) => (
          <button key={t} role="tab" aria-selected="false" type="button" className={`mt-px h-[23px] whitespace-nowrap border border-l-0 border-[#d9d9d9] ${w}`}>
            {t}
          </button>
        ))}
      </div>
      <div role="tree" className="mr-0.5 flex-1 border-r border-[#dcdcdc] bg-white pl-[5px]">
        <TreeRow guides={["line"]} icon={<Checklist />} text="批量参数" />
        <TreeRow guides={["tee"]} icon={<PartBox />} text="工件参数" />
        <TreeRow guides={["tee"]} icon={<Machine />} text="后期参数" />
        <TreeRow guides={["boxRoot"]} icon={<Coil />} text="刀路参数" />
        {groups.map((leaves, gi) => {
          const last = gi === groups.length - 1;
          return (
            <div key={gi} role="group">
              <TreeRow guides={["none", last ? "boxEnd" : "box"]} icon={<Note />} text={String(gi + 1).padStart(6, "0")} />
              {leaves.map((l, li) => (
                <TreeRow
                  key={l.t}
                  guides={["none", last ? "none" : "line", li === leaves.length - 1 ? "end" : "tee"]}
                  icon={leafIcon[l.k]}
                  text={l.t}
                  selected={l.sel}
                />
              ))}
            </div>
          );
        })}
      </div>
    </aside>
  );
}

/* ---------- main form ---------- */

function StrategyBar() {
  return (
    <div className="flex h-[34px] items-center border-b border-[#a0a0a0] pl-[5px]">
      <Radio label="开粗" checked />
      <Radio label="中光" />
      <Radio label="精光" />
      <span className="ml-1">
        <Drop label="策略" value="偏置区域二粗" width="w-[140px]" tone="white" icon={<Layers />} />
      </span>
      <button type="button" aria-label="新建刀具" className="grid w-[37px] shrink-0 place-items-center">
        <Tools />
      </button>
      <Drop label="刀具" value="D12" width="w-[144px]" tone="white" arrowBox icon={<span className="ml-0.5 block"><Bar /></span>} />
      <div className="ml-1 flex gap-[3px]">
        <TextBtn className="h-7 w-[58px]">
          <Coil s={24} />
          刀路
        </TextBtn>
        <TextBtn className="h-7 w-[68px] gap-px">
          <Note s={20} />
          文件夹
        </TextBtn>
        <TextBtn className="h-7 w-[58px]">
          <Station />
          工位
        </TextBtn>
        <IconBtn label="新建工位">
          <Station />
        </IconBtn>
        <IconBtn label="新建模板">
          <Note s={20} plus />
        </IconBtn>
      </div>
    </div>
  );
}

function BasicSection() {
  return (
    <section>
      <SectionHead icon={<Dots />} title="基本参数" />
      <div className="flex">
        <div className="flex w-[228px] shrink-0 flex-col justify-between pb-px">
          <div className="pt-[11px] pl-[15px]">
            <BlockPicture />
          </div>
          <div className="flex items-center pl-1.5">
            <Lbl width="w-[58px]">刀路：13</Lbl>
            <Lbl width="w-[26px]">标题</Lbl>
            <Drop label="标题" value="" width="w-[103px]" tone="white" />
            <span className="ml-1">
              <IconBtn label="添加标题">
                <AddNote />
              </IconBtn>
            </span>
          </div>
        </div>

        <div className="shrink-0">
          <div className="flex">
            <div className="w-[402px]">
              <div className="flex h-[52px] items-start">
                <fieldset className="mt-[3px] h-[48px] w-[246px] border border-[#dcdcdc] px-1">
                  <legend className="ml-0.5 h-4 px-0.5">余量与公差</legend>
                  <div className="-mt-px flex items-center">
                    <IconBtn label="余量">
                      <Cutter />
                    </IconBtn>
                    <span className="ml-1">
                      <Field label="径向余量" value="0.25" />
                    </span>
                    <span className="grid w-[35px] place-items-center">
                      <Cutter mode="bottom" />
                    </span>
                    <Field label="轴向余量" value="0.17" />
                    <Lbl width="w-[33px] pl-[5px]">公差</Lbl>
                    <Field label="公差" value="0.01" />
                  </div>
                </fieldset>
                <div className="mt-1 ml-4">
                  <Check label="部件余量" />
                </div>
              </div>
              <div className="flex h-[30px] items-center pl-px">
                <span className="w-[70px]">
                  <Check label="坐标系" />
                </span>
                <Drop label="坐标系" value="" width="w-[175px]" tone="disabled" />
                <span className="mx-[5px]">
                  <IconBtn label="选取坐标系">
                    <Axes />
                  </IconBtn>
                </span>
                <span className="ml-[3px] w-[76px]">
                  <Check label="手动计算" />
                </span>
                <IconBtn label="辅助面" active>
                  <Stack />
                </IconBtn>
              </div>
            </div>
            <div className="flex flex-col gap-[3px] pt-[9px]">
              <TextBtn className="h-[33px] w-[83px] gap-px">
                <Chart />
                计算当前
              </TextBtn>
              <TextBtn className="h-[33px] w-[83px] gap-px">
                <Chart />
                队列当前
              </TextBtn>
            </div>
          </div>

          <div className="flex h-[30px] items-center pl-px">
            <span className="w-[70px]">
              <Check label="切入切出" on />
            </span>
            <Drop label="切入切出" value="区域清除\浅滩和陡峭内定" width="w-[175px]" />
            <span className="mx-[5px]">
              <IconBtn label="切入切出设置">
                <LeadIn />
              </IconBtn>
            </span>
            <span className="ml-[3px] w-[117px]">
              <Check label="不后处理此刀路" />
            </span>
            <span className="w-[52px]">
              <Check label="配置" />
            </span>
            <IconBtn label="信息">
              <Info />
            </IconBtn>
          </div>

          <div className="flex h-[30px] items-center pl-px">
            <span className="w-[70px]">
              <Check label="点分布" on />
            </span>
            <Drop label="点分布" value="修圆(区域清除)" width="w-[175px]" tone="disabled" />
            <span className="mx-[5px]">
              <IconBtn label="点分布设置">
                <Dots s={20} />
              </IconBtn>
            </span>
            <span className="ml-[3px] w-[49px]">
              <Check label="备注" />
            </span>
            <Drop label="备注" value="倒角" width="w-[110px]" tone="pale" />
            <span className="ml-[11px]">
              <IconBtn label="添加备注">
                <AddNote />
              </IconBtn>
            </span>
          </div>

          <div className="flex h-[30px] items-center pl-px">
            <span className="w-[71px]">
              <Check label="计算前宏" />
            </span>
            <Drop label="计算前宏" value="芯子第一面" width="w-[150px]" tone="disabled" />
            <span className="ml-[3px]">
              <IconBtn label="选择前宏">
                <Macro />
              </IconBtn>
            </span>
            <Lbl width="w-[62px] pl-[11px]">半径补正</Lbl>
            <Drop label="半径补正" value="无" width="w-[60px]" />
          </div>

          <div className="flex h-[30px] items-center pl-px">
            <span className="w-[71px]">
              <Check label="计算后宏" />
            </span>
            <Drop label="计算后宏" value="芯子第二次" width="w-[150px]" tone="disabled" />
            <span className="mr-[7px] ml-[3px]">
              <IconBtn label="选择后宏">
                <Macro />
              </IconBtn>
            </span>
            <div className="flex items-center gap-[3px]">
              <BareCheck label="限制最大Z" />
              <button type="button" disabled className="h-[23px] w-[45px] border border-[#bfbfbf] bg-[#cccccc] text-[#9a9a9a]">
                最大Z
              </button>
              <Field label="最大Z" value="0" width="w-[46px]" off />
            </div>
            <div className="ml-1.5 flex items-center gap-[3px]">
              <BareCheck label="限制最小Z" />
              <button type="button" disabled className="h-[23px] w-[45px] border border-[#bfbfbf] bg-[#cccccc] text-[#9a9a9a]">
                最小Z
              </button>
              <Field label="最小Z" value="0" width="w-[46px]" off />
            </div>
          </div>
        </div>
      </div>
    </section>
  );
}

const offsetRows = [
  { a: "切削方向", av: "任意", c: "外部接近", con: true },
  { a: "轮廓方向", av: "顺铣", b: "轮廓光顺", bv: "0.06", c: "偏置模型", con: false },
  { a: "加工顺序", av: "自动", b: "光顺余量", bv: "10", c: "保持切削方向", con: false },
  { a: "平坦区域", av: "区域", b: "区域过滤", bv: "0.6", c: "仅闭合区域", con: true },
];

function OffsetSection() {
  return (
    <section>
      <SectionHead icon={<Layers />} title="偏置区域清除" />
      <div className="flex pt-[5px] pl-2.5">
        <div className="w-[387px] shrink-0">
          {offsetRows.map((r) => (
            <div key={r.a} className="flex h-[29px] items-center">
              <Lbl width="w-[51px]">{r.a}</Lbl>
              <Drop label={r.a} value={r.av} width="w-20" />
              {r.b ? (
                <>
                  <span className="ml-[15px] w-[75px]">
                    <Check label={r.b} on />
                  </span>
                  <Field label={r.b} value={r.bv!} />
                </>
              ) : (
                <>
                  <Lbl width="ml-6 w-[31px]">连接</Lbl>
                  <Drop label="连接" value="直" width="w-20" />
                </>
              )}
              <span className="ml-2.5">
                <Check label={r.c} on={r.con} />
              </span>
            </div>
          ))}
        </div>
        <Check label="旋风铣" />
      </div>

      <fieldset className="mt-1 mr-[25px] ml-[3px] h-[53px] rounded-md border border-[#a8a8a8] px-1.5">
        <legend className="ml-[3px] pr-2">
          <Check label="残留加工" on />
        </legend>
        <div className="flex items-center pt-[5px]">
          <Lbl width="w-[53px]">参考类型</Lbl>
          <Drop label="参考类型" value="刀具路径" width="w-20" />
          <span className="ml-0.5">
            <Drop label="参考刀路" value="04开粗- D6大-偏置区域二粗" width="w-[180px]" tone="white" arrowBox />
          </span>
          <Lbl width="w-[59px] pl-1.5">检测厚于</Lbl>
          <Field label="检测厚于" value="0.1" width="w-8" />
          <Lbl width="w-[33px] pl-[5px]">扩展</Lbl>
          <Field label="扩展" value="0.5" width="w-8" />
          <span className="ml-3">
            <Check label="自动优化" />
          </span>
        </div>
      </fieldset>
    </section>
  );
}

function StockSection() {
  return (
    <section className="mt-0.5">
      <SectionHead icon={<Block />} title="毛坯" />
      <div className="mt-1.5 mr-6 flex h-[29px] items-center">
        <Lbl width="w-[195px] pr-3 text-right">件毛坯外</Lbl>
        <span className="w-[74px]">
          <Check label="圆柱体" />
        </span>
        <Lbl width="w-[43px]">XY偏置</Lbl>
        <Field label="XY偏置" value="0" width="w-[60px]" />
        <Lbl width="w-[61px] pr-0.5 text-right">+Z偏置</Lbl>
        <Field label="+Z偏置" value="1" width="w-[60px]" />
        <Lbl width="w-[61px] pr-[5px] text-right">-Z偏置</Lbl>
        <Field label="-Z偏置" value="0" width="w-[60px]" />
        <TextBtn className="ml-auto h-[26px] w-12">预览</TextBtn>
      </div>
      <div className="flex h-[29px] items-center text-[#a0a0a0]">
        <Lbl width="w-[222px] text-right text-black">分别设置偏置量</Lbl>
        {["-X", "+X", "-Y", "+Y"].map((n, i) => (
          <React.Fragment key={n}>
            <Lbl width={i === 0 ? "w-11 pr-2 text-right" : "w-9 pr-1.5 text-right"}>{n}</Lbl>
            <Field label={n} value="0" width="w-[60px]" off />
          </React.Fragment>
        ))}
      </div>
      <div className="mt-[21px] flex h-[29px] items-center gap-0.5">
        <Lbl width="w-[178px] pr-[7px] text-right">界内部</Lbl>
        <IconBtn label="边界">
          <Blob />
        </IconBtn>
        <Drop label="边界" value="2" width="w-[120px]" />
      </div>
      <div className="mt-[21px] flex h-[29px] items-center pl-[118px]">
        <div className="flex gap-[35px] self-start">
          <Field label="长度" value="" width="w-[50px]" />
          <Field label="宽度" value="" width="w-[50px]" />
          <Field label="高度" value="" width="w-[50px]" />
        </div>
        <TextBtn className="ml-1.5 h-6 w-[54px] pl-[14px]">重读</TextBtn>
        <button type="button" aria-label="查看" className="ml-[7px] grid h-6 w-[26px] place-items-center border border-[#adadad] bg-[#e1e1e1]">
          <Lens />
        </button>
        <span className="ml-1.5">
          <Check label="自动碰撞" />
        </span>
      </div>
    </section>
  );
}

function StatusBar() {
  return (
    <footer className="flex h-6 items-center pr-px pb-0.5 pl-1">
      <span className="whitespace-pre">前台PM: 参数已读取</span>
      <div className="ml-auto flex items-center whitespace-nowrap">
        <span className="w-[67px]">工件尺寸：</span>
        <span className="w-[76px]">200*120*45</span>
        {[
          { n: "撤销", i: <Undo />, w: "w-[30px]" },
          { n: "视图", i: <Cube />, w: "w-[30px]" },
          { n: "文件夹", i: <SmallFolder />, w: "w-9" },
        ].map((b) => (
          <button key={b.n} type="button" aria-label={b.n} className={`flex items-center gap-1.5 ${b.w}`}>
            {b.i}
            <svg width="5" height="3" viewBox="0 0 5 3" aria-hidden="true">
              <path d="M0 0 H5 L2.500 3Z" fill="#000" />
            </svg>
          </button>
        ))}
        <svg width="12" height="12" viewBox="0 0 12 12" fill="#a5a5a5" aria-hidden="true">
          <path d="M9 1h2v2h-2z M5 5h2v2h-2z M9 5h2v2h-2z M1 9h2v2h-2z M5 9h2v2h-2z M9 9h2v2h-2z" />
        </svg>
      </div>
    </footer>
  );
}

/* ---------- menus ---------- */

type Item = { t: string; i?: ReactNode; sub?: boolean; off?: boolean; hot?: boolean } | "-";

const mainMenu: Item[] = [
  { t: "加载模板(Y)", i: <Note s={15} />, sub: true },
  { t: "插入刀路模板(H)", i: <Note s={15} plus />, sub: true },
  { t: "存为刀路模板(S)", i: <Disk />, sub: true },
  "-",
  { t: "展开刀路(A)", i: <TreeIcon s={13} /> },
  { t: "折叠刀路(X)", i: <Collapse s={11} /> },
  "-",
  { t: "复制(C)" },
  { t: "复制到之后(B)", i: <AddNote s={15} /> },
  { t: "粘贴(V)", off: true },
  { t: "粘贴并转换为中光(Z)", off: true },
  { t: "粘贴并转换为精光(F)", off: true },
  "-",
  {
    t: "删除(D)",
    i: (
      <Svg s={13}>
        <path d="M2 2 L14 14 M14 2 L2 14" stroke="#000" strokeWidth="2.800" />
      </Svg>
    ),
  },
  { t: "清空所有(E)", i: <CrossMark s={15} /> },
  "-",
  { t: "批量设置(T)", i: <Gear s={16} />, sub: true, hot: true },
  { t: "批量获取(G)", i: <PickList />, sub: true },
  "-",
  { t: "计算已选刀路(W)", i: <Monitor s={14} /> },
  { t: "队列已选刀路(Q)", i: <Queue s={14} /> },
];

const subMenu: Item[] = [
  { t: "余量(Y)", i: <Cutter s={15} /> },
  { t: "公差(G)" },
  { t: "坐标系(W)", i: <Axes s={13} /> },
  { t: "余量和公差(H)", i: <Cutter s={15} mode="pink" /> },
  { t: "部件余量(L)", i: <PartStock /> },
  { t: "辅助面(F)", i: <Stack s={14} red />, hot: true },
  { t: "毛坯(M)", i: <Block /> },
  { t: "边界(J)", i: <Blob s={13} /> },
  { t: "边界曲面(B)", i: <PickSurface /> },
  { t: "刀具设置(D)", i: <ToolSetup /> },
  { t: "更改刀具(T)", i: <Tools s={14} /> },
  { t: "策略曲面(C)", i: <StrategySurface /> },
  { t: "更改刀头(A)", i: <ToolTip /> },
  { t: "智能模板设置", i: <SmartTemplate /> },
  { t: "特征(E)", i: <Feature /> },
];

function Menu({ items, place, label }: { items: Item[]; place: string; label: string }) {
  return (
    <div role="menu" aria-label={label} className={`absolute border border-[#808080] bg-[#fcfcfc] shadow-[3px_3px_3px_rgba(0,0,0,0.4)] ${place}`}>
      <div className="bg-[linear-gradient(to_right,#f9f9f9_0,#efefef_24px,#fcfcfc_24px)] p-px">
        {items.map((it, i) =>
          it === "-" ? (
            <div key={i} role="separator" className="flex h-1.5 items-center pl-[30px]">
              <span className="h-px w-full bg-[#bdbdbd]" />
            </div>
          ) : (
            <button
              key={it.t}
              type="button"
              role="menuitem"
              disabled={it.off}
              className={`flex h-[22px] w-full items-center border whitespace-nowrap ${
                it.hot ? "border-[#0078d7] bg-[#b3d7f3]" : "border-transparent"
              } ${it.off ? "text-[#8b8b8b]" : "text-black"}`}
            >
              <span className="grid w-5 place-items-center">{it.i}</span>
              <span className="ml-[13px]">{it.t}</span>
              {it.sub && (
                <svg width="5" height="8" viewBox="0 0 5 8" className="mr-[9px] ml-auto" aria-hidden="true">
                  <path d="M0 0 V8 L5 4Z" fill="#000" />
                </svg>
              )}
            </button>
          )
        )}
      </div>
    </div>
  );
}

export default function App() {
  return (
    <div className="relative flex min-h-screen flex-col overflow-hidden bg-[#d4d4d4] pt-0.5 pr-[3px] pl-0.5 font-['Noto_Sans','Noto_Sans_CJK_SC',sans-serif] text-[12px] leading-4 text-black select-none">
      <div className="flex flex-1 flex-col border border-[#707070] bg-[#f0f0f0]">
        <TitleBar />
        <ToolBar />
        <div className="flex flex-1 gap-[3px] pr-0.5">
          <LeftPanel />
          <main className="min-w-0 flex-1 border-t-2 border-r border-b border-l border-[#6b6b6b]">
            <StrategyBar />
            <BasicSection />
            <OffsetSection />
            <StockSection />
          </main>
        </div>
        <StatusBar />
      </div>
      <div className="-mr-[3px] -ml-0.5 h-[5px] bg-[linear-gradient(to_right,#ecd0e2_0%,#e8cfe0_84%,#c98a8a_86%,#ecd5e4_88%,#e6d3df_100%)]" />

      <Menu items={mainMenu} place="top-[491px] left-[148px] w-[188px]" label="刀路菜单" />
      <Menu items={subMenu} place="top-[543px] left-[335px] w-[154px]" label="批量设置" />
      <div className="pointer-events-none absolute top-[649px] left-[324px] h-[35px] w-[111px] border-[3px] border-[#f93a36]" />
      <div
        role="tooltip"
        className="absolute top-[690px] left-[445px] border border-[#767676] bg-white px-1.5 py-0.5 whitespace-nowrap text-[#575757] shadow-[3px_3px_2px_rgba(0,0,0,0.4)]"
      >
        将当前显示刀路的辅助面设置复制到已选刀路中
      </div>
    </div>
  );
}
